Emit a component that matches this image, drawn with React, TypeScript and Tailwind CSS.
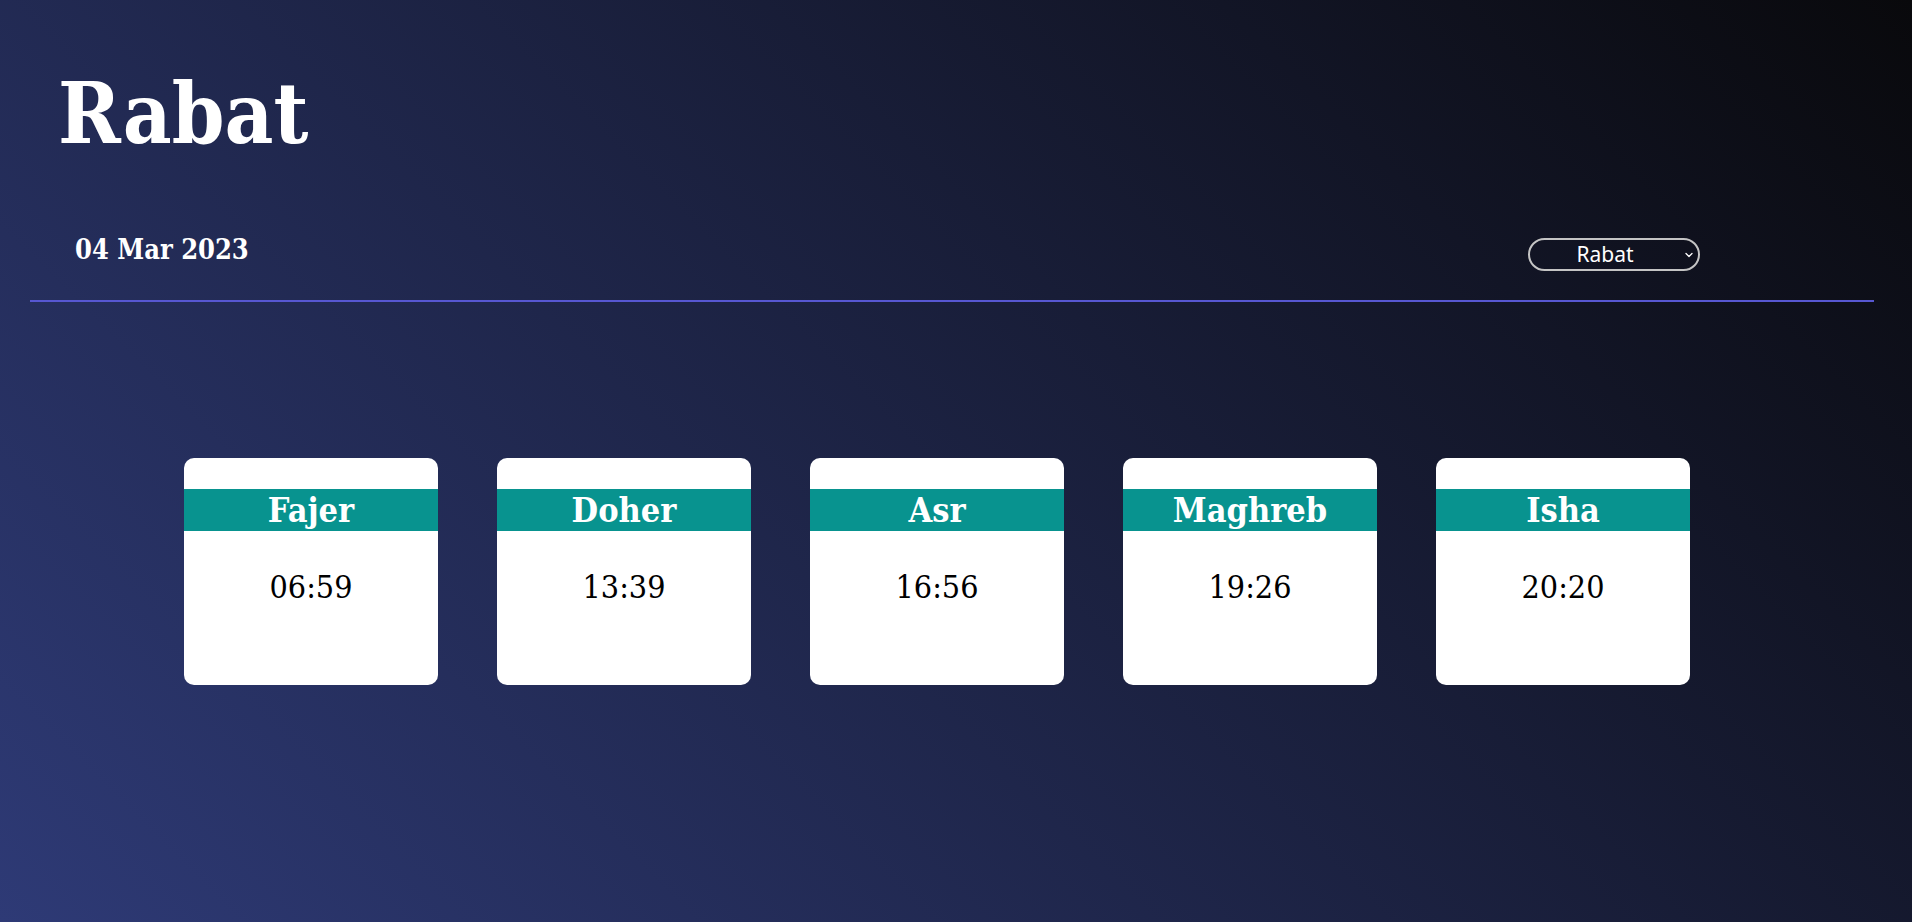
import { useState } from 'react';

const prayers = [
  { name: 'Fajer', time: '06:59' },
  { name: 'Doher', time: '13:39' },
  { name: 'Asr', time: '16:56' },
  { name: 'Maghreb', time: '19:26' },
  { name: 'Isha', time: '20:20' },
];

const cities = ['Rabat', 'Casablanca', 'Fes', 'Marrakech', 'Tanger', 'Agadir'];

function PrayerCard({ name, time }: { name: string; time: string }) {
  return (
    <div className="w-[254px] h-[227px] shrink-0 bg-white rounded-[10px] overflow-hidden pt-[31px]">
      <div className="h-[42px] bg-[#08938f] flex items-center justify-center">
        <h2 className="text-white font-bold text-[34px] leading-none">{name}</h2>
      </div>
      <p className="mt-[40px] text-center text-black text-[32px] leading-none">{time}</p>
    </div>
  );
}

export default function App() {
  const [city, setCity] = useState('Rabat');

  return (
    <div className="min-h-screen w-full bg-[linear-gradient(45deg,#2e3a76,#09090c)] [font-family:'DejaVu_Serif_Condensed','DejaVu_Serif',serif]">
      {/* Header */}
      <div className="pl-[58px] pt-[72px]">
        <h1 className="text-white font-bold text-[84px] leading-none">{city}</h1>
      </div>

      <div className="mt-[80px] flex items-start">
        <p className="pl-[75px] text-white font-bold text-[27px] leading-none">04 Mar 2023</p>
        <div className="relative ml-auto mr-[212px] mt-[2px]">
          <select
            value={city}
            onChange={(e) => setCity(e.target.value)}
            className="appearance-none block w-[172px] h-[33px] rounded-full border-2 border-[#c4c4c4] bg-transparent text-white text-[21px] leading-none text-center pr-[18px] [font-family:'Noto_Sans',sans-serif] outline-none"
          >
            {cities.map((c) => (
              <option key={c} value={c} className="text-black">
                {c}
              </option>
            ))}
          </select>
          <svg
            className="absolute right-[7px] top-[14px] pointer-events-none"
            width="8"
            height="6"
            viewBox="0 0 8 6"
            fill="none"
          >
            <path d="M1 1.5 4 4.5 7 1.5" stroke="white" strokeWidth="1.3" strokeLinecap="round" strokeLinejoin="round" />
          </svg>
        </div>
      </div>

      <div className="mt-[29px] ml-[30px] mr-[38px] h-[2px] bg-[#5757d1]" />

      {/* Prayer times */}
      <div className="mt-[156px] pl-[184px] flex gap-[59px]">
        {prayers.map((p) => (
          <PrayerCard key={p.name} name={p.name} time={p.time} />
        ))}
      </div>
    </div>
  );
}
